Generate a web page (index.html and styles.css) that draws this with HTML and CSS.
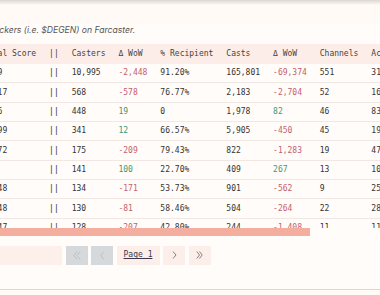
FILE: index.html
```html
<!DOCTYPE html>
<html>
<head>
<meta charset="utf-8">
<link rel="stylesheet" href="styles.css">
</head>
<body>
<div class="shade"></div>
<div class="card">
  <p class="desc">Top tickers (i.e. $DEGEN) on Farcaster.</p>
  <div class="table-wrap">
    <table>
      <thead>
        <tr><th>Total Score</th><th>||</th><th>Casters</th><th>Δ WoW</th><th>% Recipient</th><th>Casts</th><th>Δ WoW</th><th>Channels</th><th>Active Casters</th></tr>
      </thead>
      <tbody>
        <tr><td>43.9</td><td>||</td><td>10,995</td><td class="neg">-2,448</td><td>91.20%</td><td>165,801</td><td class="neg">-69,374</td><td>551</td><td>31,402</td></tr>
        <tr><td>12.17</td><td>||</td><td>568</td><td class="neg">-578</td><td>76.77%</td><td>2,183</td><td class="neg">-2,704</td><td>52</td><td>16,210</td></tr>
        <tr><td>8.46</td><td>||</td><td>448</td><td class="pos">19</td><td>0</td><td>1,978</td><td class="pos">82</td><td>46</td><td>83,115</td></tr>
        <tr><td>10.99</td><td>||</td><td>341</td><td class="pos">12</td><td>66.57%</td><td>5,905</td><td class="neg">-450</td><td>45</td><td>19,876</td></tr>
        <tr><td>10.72</td><td>||</td><td>175</td><td class="neg">-209</td><td>79.43%</td><td>822</td><td class="neg">-1,283</td><td>19</td><td>47,330</td></tr>
        <tr><td>7.5</td><td>||</td><td>141</td><td class="pos">100</td><td>22.70%</td><td>409</td><td class="pos">267</td><td>13</td><td>10,554</td></tr>
        <tr><td>12.48</td><td>||</td><td>134</td><td class="neg">-171</td><td>53.73%</td><td>901</td><td class="neg">-562</td><td>9</td><td>25,019</td></tr>
        <tr><td>11.48</td><td>||</td><td>130</td><td class="neg">-81</td><td>58.46%</td><td>504</td><td class="neg">-264</td><td>22</td><td>28,643</td></tr>
        <tr><td>10.47</td><td>||</td><td>128</td><td class="neg">-207</td><td>42.80%</td><td>244</td><td class="neg">-1,408</td><td>11</td><td>11,208</td></tr>
        <tr><td>9.31</td><td>||</td><td>117</td><td class="pos">5</td><td>38.10%</td><td>231</td><td class="neg">-98</td><td>8</td><td>9,880</td></tr>
      </tbody>
    </table>
  </div>
  <div class="scrollbar"><div class="thumb"></div></div>
  <div class="pager">
    <div class="info"></div>
    <div class="btn disabled"><svg width="8" height="9" viewBox="0 0 8 9"><path d="M4 0.5 L0.8 4.5 L4 8.5 M7.2 0.5 L4 4.5 L7.2 8.5" fill="none" stroke="currentColor" stroke-width="0.8"/></svg></div>
    <div class="btn disabled"><svg width="5" height="9" viewBox="0 0 5 9"><path d="M4 0.5 L0.8 4.5 L4 8.5" fill="none" stroke="currentColor" stroke-width="0.8"/></svg></div>
    <div class="btn page">Page 1</div>
    <div class="btn"><svg width="5" height="8" viewBox="0 0 5 8"><path d="M1 0.5 L4 4 L1 7.5" fill="none" stroke="currentColor" stroke-width="0.8"/></svg></div>
    <div class="btn"><svg width="7" height="8" viewBox="0 0 7 8"><path d="M0.8 0.5 L3.5 4 L0.8 7.5 M3.5 0.5 L6.2 4 L3.5 7.5" fill="none" stroke="currentColor" stroke-width="0.8"/></svg></div>
  </div>
</div>
</body>
</html>
```

FILE: styles.css
```css
* { box-sizing: border-box; }
html, body { margin: 0; padding: 0; }
body {
  background: #fffaf6;
  width: 380px;
  height: 295px;
  overflow: hidden;
}
.shade {
  height: 5px;
  background: linear-gradient(to bottom, rgba(110, 100, 90, 0.24), rgba(110, 100, 90, 0));
}
.card {
  margin-left: -23.4px;
  width: 720px;
  padding-bottom: 24.5px;
  border-bottom: 1px solid #e6d6c6;
  background: #fffcf9;
}
.desc {
  margin: 19px 0 8px;
  font: italic 8.6px/12px Inter, "Noto Sans", sans-serif;
  color: #555;
}
.table-wrap {
  height: 184px;
  overflow: hidden;
}
table {
  border-collapse: collapse;
  font: 8px/12px "DejaVu Sans Mono", monospace;
  color: #333;
  white-space: nowrap;
}
th, td {
  padding: 0 6.5px;
  text-align: left;
  font-weight: normal;
}
th { color: #444; }
thead tr {
  background: #fdede8;
  height: 19.5px;
}
tbody tr {
  height: 19.35px;
  border-bottom: 1px solid #f1e8e3;
}
.neg { color: #c4606d; }
.pos { color: #3d9873; }
.scrollbar { height: 8px; }
.thumb {
  height: 8px;
  width: 333.4px;
  background: #f4ae9f;
}
.pager {
  display: flex;
  gap: 3.5px;
  margin-top: 10px;
  height: 18.5px;
}
.info {
  width: 85.4px;
  background: #fdf0eb;
}
.btn {
  width: 22px;
  display: flex;
  align-items: center;
  justify-content: center;
  background: #fcefea;
  color: #666;
}
.btn.disabled {
  background: #d5d9dc;
  color: #b3bac0;
}
.btn.page {
  width: 43px;
  font: 8px/12px "DejaVu Sans Mono", monospace;
  color: #3b3650;
  text-decoration: underline;
}
```
